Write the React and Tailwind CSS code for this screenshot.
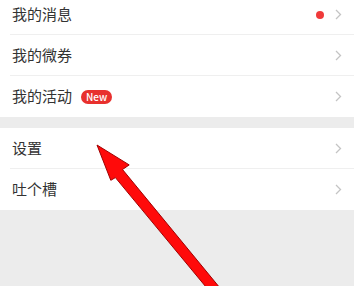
import React from "react";

const Chevron = () => (
    <svg width="7" height="11" viewBox="0 0 7 11" className="shrink-0">
        <polyline points="1,1 5.5,5.5 1,10" fill="none" stroke="#c4c4c4" strokeWidth="1.3" />
    </svg>
);

const Row = ({ label, extra, dot, last, className = "" }) => (
    <div className={`relative h-[41px] flex items-center pl-[12px] pr-[12px] bg-white ${className}`}>
        <span className="text-[15px] text-[#333333]">{label}</span>
        {extra}
        <div className="flex-1" />
        {dot && <span className="w-[8px] h-[8px] rounded-full bg-[#f03a3a] mr-[11px]" />}
        <Chevron />
        {!last && <div className="absolute left-[10px] right-0 bottom-0 h-px bg-[#efefef]" />}
    </div>
);

const Arrow = () => (
    <svg className="absolute inset-0 pointer-events-none" width="354" height="286" viewBox="0 0 354 286">
        <polygon
            points="97,145 129.2,164.9 122.5,169.5 223.3,292 214.7,297.5 115.4,177.6 110.8,180.3"
            fill="#ff0a0a"
            stroke="#a00000"
            strokeWidth="1"
            strokeLinejoin="round"
        />
    </svg>
);

export default function App() {
    return (
        <div
            className="relative w-[354px] h-[286px] overflow-hidden bg-[#ececec]"
            style={{ fontFamily: '"Noto Sans CJK SC", "Noto Sans", sans-serif' }}
        >
            <div className="-mt-[6px]">
                <Row label="我的消息" dot />
                <Row label="我的微券" />
                <Row
                    label="我的活动"
                    last
                    extra={
                        <span className="ml-[9px] h-[14px] px-[5px] rounded-full bg-[#e8302e] text-white text-[10px] leading-[14px] font-medium">
                            New
                        </span>
                    }
                />
            </div>
            <div className="mt-[11px]">
                <Row label="设置" className="h-[40px]" />
                <Row label="吐个槽" last />
            </div>
            <Arrow />
        </div>
    );
}
